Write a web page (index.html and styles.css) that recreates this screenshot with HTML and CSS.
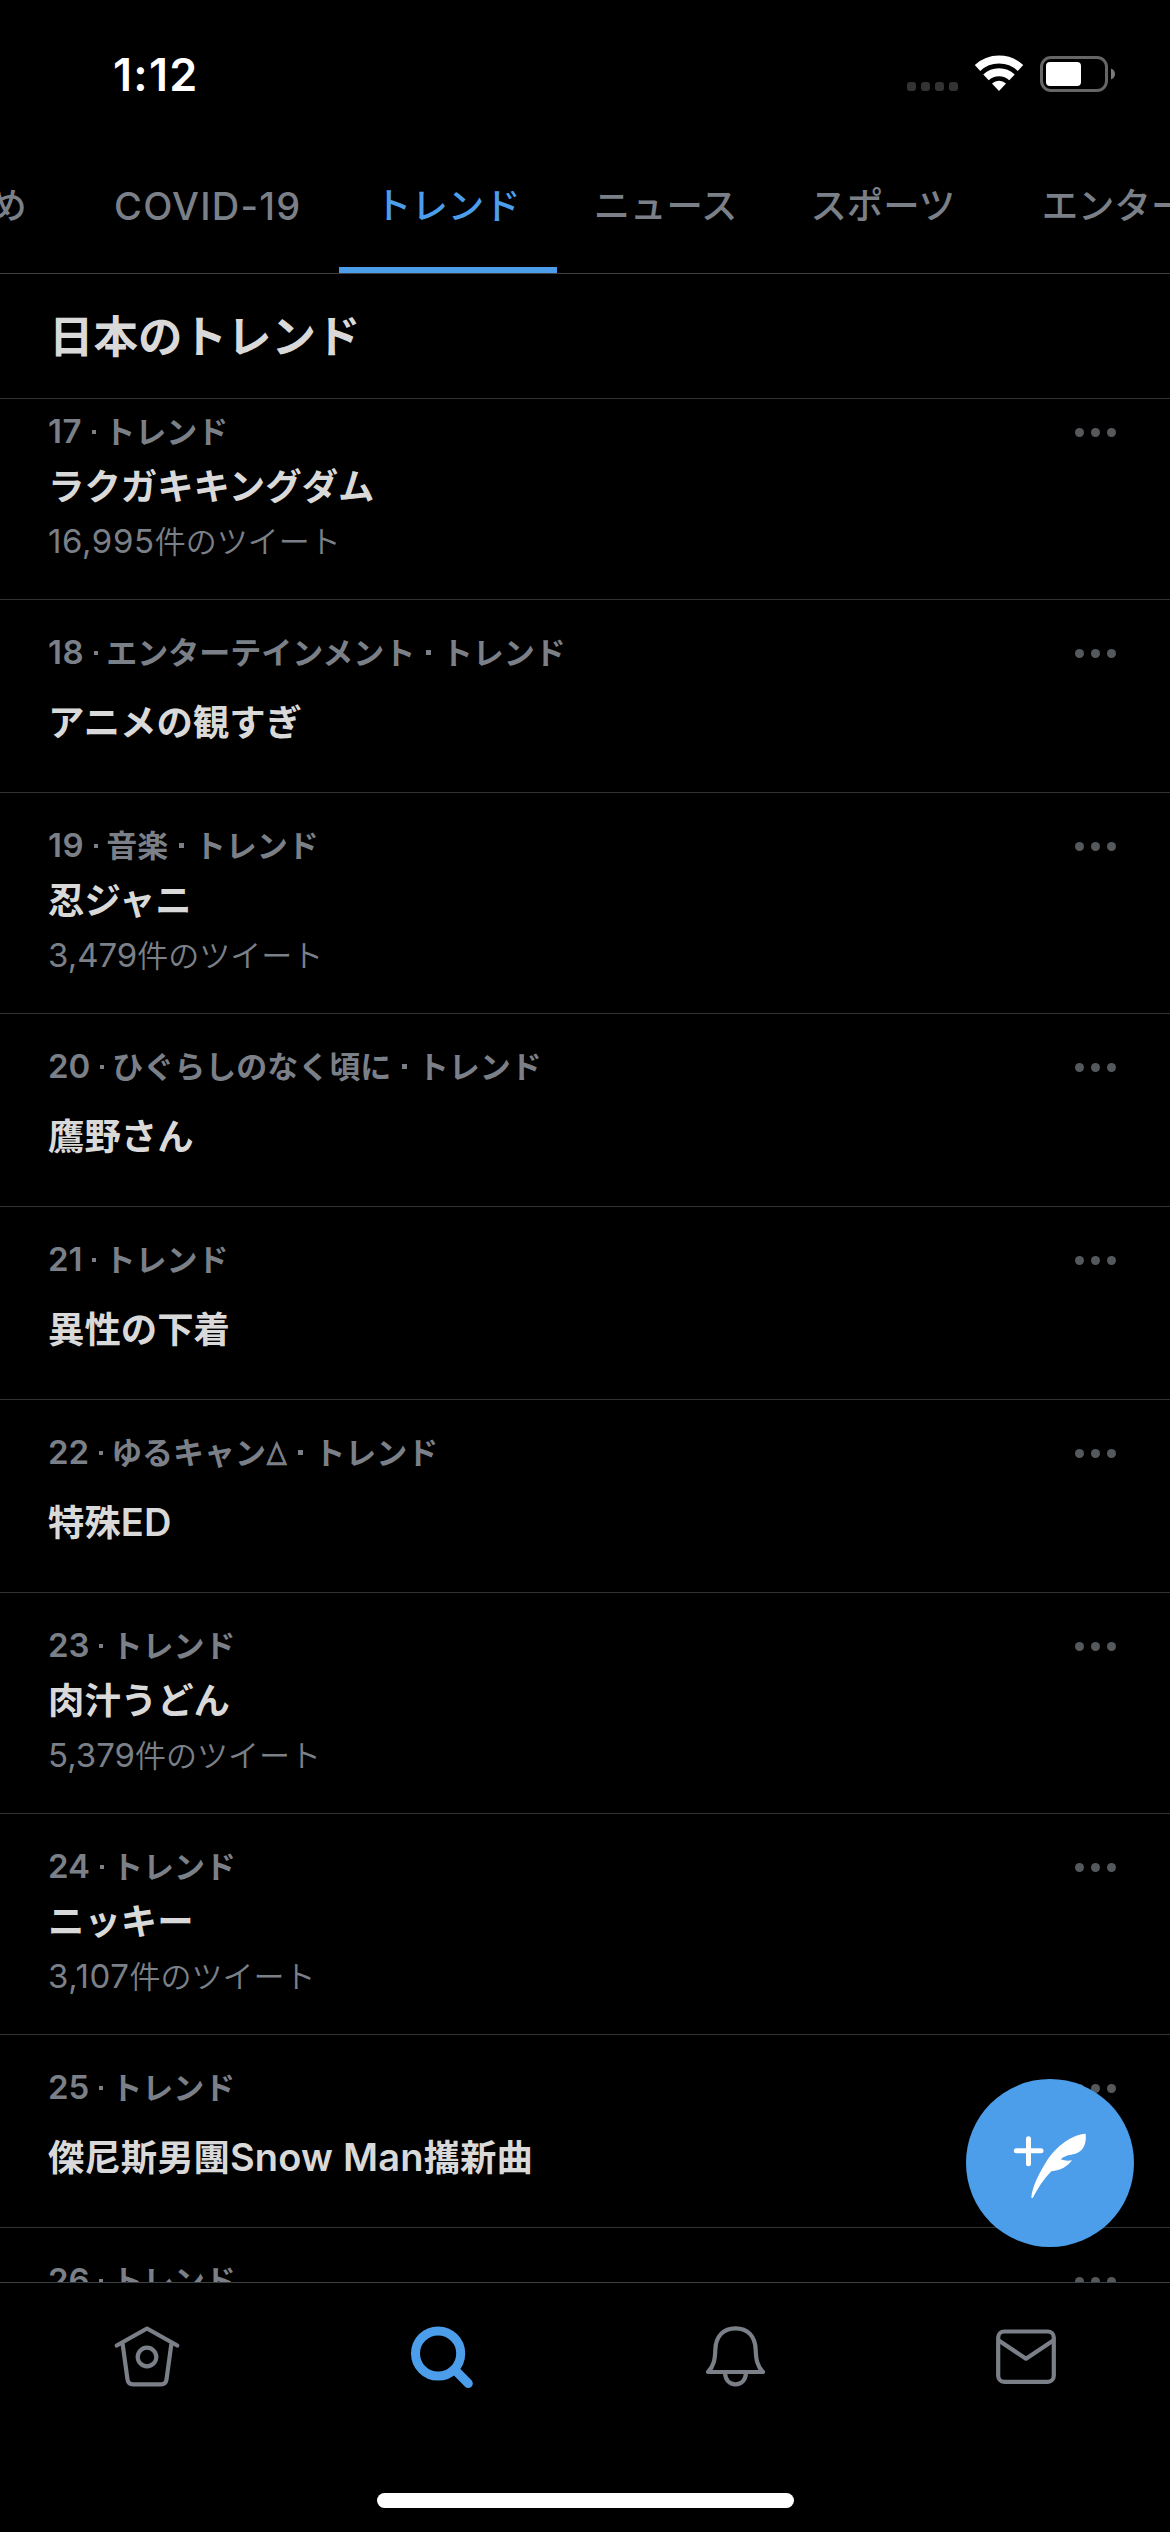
FILE: index.html
```html
<!DOCTYPE html>
<html lang="ja">
<head>
<meta charset="utf-8">
<title>トレンド</title>
<link rel="stylesheet" href="styles.css">
</head>
<body>
<div class="screen">
  <header class="status">
    <div class="time">1:12</div>
    <svg class="status-icons" width="210" height="40" viewBox="906 54 210 40">
      <g fill="#333"><rect x="907" y="82" width="9" height="9" rx="3"/><rect x="921" y="82" width="9" height="9" rx="3"/><rect x="935" y="82" width="9" height="9" rx="3"/><rect x="949" y="82" width="9" height="9" rx="3"/></g>
      <g fill="none" stroke="#fff" stroke-width="8"><path d="M977.5 68A31.5 31.5 0 0 1 1020.5 68"/><path d="M986 77.3A19 19 0 0 1 1012 77.3"/></g>
      <path d="M999 91l-7-7.6a10.3 10.3 0 0 1 14 0z" fill="#fff"/>
      <rect x="1041.5" y="57.5" width="65" height="33" rx="9.5" fill="none" stroke="#666" stroke-width="3"/>
      <rect x="1046" y="62" width="35" height="24" rx="4" fill="#fff"/>
      <path d="M1111 68.5q4 1.800 4 5.500t-4 5.500z" fill="#7a7a7a"/>
    </svg>
  </header>
  <nav class="tabs">
    <a class="tab wide">おすすめ</a>
    <a class="tab"><span class="covid">COVID-19</span></a>
    <a class="tab active">トレンド</a>
    <a class="tab">ニュース</a>
    <a class="tab">スポーツ</a>
    <a class="tab wide">エンターテインメント</a>
  </nav>
  <h1 class="heading">日本のトレンド</h1>
  <main class="list">
    <article class="row">
      <div class="meta"><span class="num ones">17</span><i class="dot"></i>トレンド</div>
      <div class="name">ラクガキキングダム</div>
      <div class="count"><span class="num ones">16,995</span>件のツイート</div>
      <span class="more"><i></i><i></i><i></i></span>
    </article>
    <article class="row short">
      <div class="meta"><span class="num ones">18</span><i class="dot"></i>エンターテインメント<i class="dot big"></i>トレンド</div>
      <div class="name">アニメの観すぎ</div>
      <span class="more"><i></i><i></i><i></i></span>
    </article>
    <article class="row">
      <div class="meta"><span class="num ones">19</span><i class="dot"></i>音楽<i class="dot big"></i>トレンド</div>
      <div class="name">忍ジャニ</div>
      <div class="count"><span class="num">3,479</span>件のツイート</div>
      <span class="more"><i></i><i></i><i></i></span>
    </article>
    <article class="row short">
      <div class="meta"><span class="num">20</span><i class="dot"></i>ひぐらしのなく頃に<i class="dot big"></i>トレンド</div>
      <div class="name">鷹野さん</div>
      <span class="more"><i></i><i></i><i></i></span>
    </article>
    <article class="row short">
      <div class="meta"><span class="num">21</span><i class="dot"></i>トレンド</div>
      <div class="name">異性の下着</div>
      <span class="more"><i></i><i></i><i></i></span>
    </article>
    <article class="row short">
      <div class="meta"><span class="num">22</span><i class="dot"></i>ゆるキャン<span class="tri">△</span><i class="dot big"></i>トレンド</div>
      <div class="name">特殊<span class="latin">ED</span></div>
      <span class="more"><i></i><i></i><i></i></span>
    </article>
    <article class="row">
      <div class="meta"><span class="num">23</span><i class="dot"></i>トレンド</div>
      <div class="name">肉汁うどん</div>
      <div class="count"><span class="num">5,379</span>件のツイート</div>
      <span class="more"><i></i><i></i><i></i></span>
    </article>
    <article class="row">
      <div class="meta"><span class="num">24</span><i class="dot"></i>トレンド</div>
      <div class="name">ニッキー</div>
      <div class="count"><span class="num ones">3,107</span>件のツイート</div>
      <span class="more"><i></i><i></i><i></i></span>
    </article>
    <article class="row short">
      <div class="meta"><span class="num">25</span><i class="dot"></i>トレンド</div>
      <div class="name">傑尼斯男團<span class="latin">Snow Man</span>攜新曲</div>
      <span class="more"><i></i><i></i><i></i></span>
    </article>
    <article class="row short">
      <div class="meta"><span class="num">26</span><i class="dot"></i>トレンド</div>
      <span class="more"><i></i><i></i><i></i></span>
    </article>
  </main>
  <button class="compose" aria-label="ツイート">
    <svg width="168" height="168" viewBox="78 117 504 504">
      <path d="M265.500 296v75M229 332.500h74" stroke="#fff" stroke-width="15" stroke-linecap="round"/>
      <path d="M437 281C395 284 350 318 322 360C300 394 275 442 274 474H278C292 448 310 418 334 394C362 392 384 378 396 361C384 363 372 362 362 358C374 346 390 345 404 342C430 334 440 312 437 281Z" fill="#fff"/>
    </svg>
  </button>
  <footer class="bottom">
    <div class="icons">
      <svg width="80" height="80" viewBox="107 2316 80 80">
        <path d="M116.700 2345.500L147 2328.500L177.300 2345.500M122.500 2343L127.500 2379.500Q128.200 2384.300 133 2384.300H161Q165.800 2384.300 166.500 2379.500L171.500 2343"/>
        <circle cx="147" cy="2357" r="9.300"/>
      </svg>
      <svg class="on" width="80" height="80" viewBox="400 2316 80 80"><circle cx="438.100" cy="2353.500" r="22.600"/><path d="M455 2370L468.300 2383.500"/></svg>
      <svg width="80" height="80" viewBox="692.500 2316 80 80">
        <path d="M707.500 2372C713.500 2366 714.500 2359 714.800 2350C715.200 2336 723 2328.300 735 2328.300S754.800 2336 755.200 2350C755.500 2359 756.500 2366 762.500 2372ZM724.500 2373C725 2380 729 2384.300 735 2384.300S745 2380 745.500 2373"/>
      </svg>
      <svg width="80" height="80" viewBox="986 2316 80 80"><rect x="998.200" y="2331.500" width="55.600" height="50.300" rx="6"/><path d="M999.500 2341L1026 2358.700L1052.500 2341"/></svg>
    </div>
    <div class="home-bar"></div>
  </footer>
</div>
</body>
</html>
```
FILE: styles.css
```css
* { box-sizing: border-box; }
body { margin: 0; background: #000; }
.screen {
  position: relative;
  width: 1170px;
  height: 2532px;
  overflow: hidden;
  display: flex;
  flex-direction: column;
  color: #d9d9d9;
  font-family: "Inter", "Noto Sans CJK JP", sans-serif;
}
.status {
  height: 141px;
  flex: none;
  display: flex;
  align-items: flex-start;
  justify-content: space-between;
  padding: 54px 54px 0 113px;
}
.time { font-size: 45px; line-height: 42px; font-weight: 600; color: #fff; letter-spacing: 1.3px; }
.tabs {
  flex: none;
  height: 133px;
  display: flex;
  margin-left: -169px;
  border-bottom: 1px solid #3d4043;
  font-size: 36.400px;
  font-weight: 500;
  color: #7b8088;
}
.tab {
  flex: none;
  padding: 0 36.500px;
  line-height: 131px;
  white-space: nowrap;
}
.tab.wide { padding: 0 50px; }
.tab.active { color: #4c9eeb; border-bottom: 6px solid #4c9eeb; }
.covid { display: block; width: 189px; padding-left: 1px; font-size: 38px; letter-spacing: 1.2px; }
.heading {
  flex: none;
  height: 125px;
  margin: 0;
  padding-left: 49px;
  border-bottom: 1px solid #2f3336;
  font-size: 44.500px;
  line-height: 126px;
  font-weight: 700;
}
.list { flex: 1; min-height: 0; overflow: hidden; }
.row {
  position: relative;
  height: 221px;
  padding: 33px 48px 0;
  border-bottom: 1px solid #2f3336;
  display: flex;
  flex-direction: column;
  gap: 12px;
  white-space: nowrap;
}
.row:first-child { margin-top: -20px; }
.row.short { height: 193px; gap: 27px; }
.meta, .count { height: 40px; line-height: 40px; font-size: 31px; color: #7b8088; }
.meta { font-weight: 600; }
.count { font-weight: 350; }
.num { font-size: 33px; line-height: 1; }
.ones { letter-spacing: 0.6px; }
.count .num { font-weight: 400; }
.name { height: 46px; font-size: 36.400px; line-height: 46px; font-weight: 600; }
.latin { font-size: 38px; line-height: 1; letter-spacing: 0.2px; }
.dot {
  display: inline-block;
  width: 4px;
  height: 4px;
  margin: 0 8.500px 9px 9.500px;
  background: currentColor;
}
.dot.big { width: 5px; height: 5px; margin: 0 11px 9px 10.500px; }
.tri {
  display: inline-block;
  font-family: "DejaVu Sans", sans-serif;
  font-size: 28px;
  line-height: 1;
  font-weight: 400;
  -webkit-text-stroke: 1.2px currentColor;
  transform: translateY(-3px) scale(0.9, 1.05);
}
.more {
  position: absolute;
  right: 54px;
  top: 49px;
  display: flex;
  gap: 7px;
}
.more i { width: 9px; height: 9px; border-radius: 50%; background: #56595c; }
.compose {
  position: absolute;
  left: 966px;
  top: 2079px;
  width: 168px;
  height: 168px;
  padding: 0;
  border: 0;
  border-radius: 50%;
  background: #4c9eeb;
}
.compose svg { display: block; }
.bottom {
  flex: none;
  height: 250px;
  border-top: 1px solid #3d4043;
  background: #000;
}
.icons { display: flex; justify-content: space-between; padding: 33px 104px 0 107px; }
.icons svg {
  fill: none;
  stroke: #7b8088;
  stroke-width: 4.200px;
  stroke-linecap: round;
  stroke-linejoin: round;
}
.icons .on { stroke: #4c9eeb; stroke-width: 9px; }
.home-bar { width: 417px; height: 15px; margin: 97px auto 0; border-radius: 8px; background: #fff; }
```
